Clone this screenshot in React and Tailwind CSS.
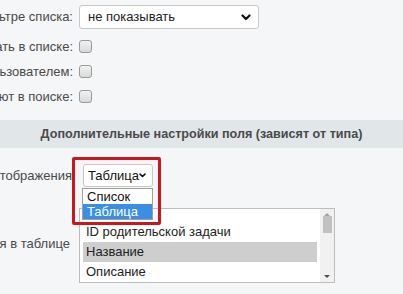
import React from "react";

function Chevron({ className = "" }) {
  return (
    <svg className={className} width="10" height="7" viewBox="0 0 10 7">
      <polyline points="1.5,1.5 5,5 8.5,1.5" fill="none" stroke="#111" strokeWidth="2.2" strokeLinecap="round" strokeLinejoin="round" />
    </svg>
  );
}

function Label({ children, className = "" }) {
  return (
    <div className={"w-[73px] shrink-0 flex justify-end whitespace-nowrap text-[13px] text-[#4a4a4a] " + className}>
      <span>{children}</span>
    </div>
  );
}

function Checkbox() {
  return (
    <div className="ml-[6px] w-[13px] h-[13px] rounded-[3px] border border-[#9a9a9a] bg-gradient-to-b from-[#f2f2f2] to-[#d9d9d9]" />
  );
}

export default function App() {
  return (
    <div
      className="relative w-[403px] h-[294px] overflow-hidden bg-[#f4f6f7] flex flex-col"
      style={{ fontFamily: '"Liberation Sans", Arial, sans-serif' }}
    >
      {/* row 1 */}
      <div className="flex items-center mt-[5px] h-[24px]">
        <Label>Показывать в фильтре списка:</Label>
        <div className="ml-[6px] w-[180px] h-[24px] rounded-[3px] border border-[#c8c8c8] bg-white flex items-center justify-between pl-[8px] pr-[7px] text-[13px] text-[#222]">
          <span>не показывать</span>
          <Chevron />
        </div>
      </div>

      <div className="mt-[5px] flex flex-col">
        <div className="flex items-center h-[25px]">
          <Label>Показывать в списке:</Label>
          <Checkbox />
        </div>
        <div className="flex items-center h-[25px]">
          <Label>Редактируется пользователем:</Label>
          <Checkbox />
        </div>
        <div className="flex items-center h-[25px]">
          <Label>Значения участвуют в поиске:</Label>
          <Checkbox />
        </div>
      </div>

      {/* header band */}
      <div className="mt-[11px] h-[28px] bg-[#e1e6e8] flex items-center justify-center text-[12.6px] font-bold text-[#4a4a4a]">
        Дополнительные настройки поля (зависят от типа)
      </div>

      {/* view type row */}
      <div className="flex items-center mt-[16px] h-[23px]">
        <Label className="pr-[1px]">Вид отображения</Label>
        <div className="ml-[10px] w-[70px] h-[23px] rounded-[3px] border border-[#c8c8c8] bg-white flex items-center justify-between pl-[4px] pr-[6px] text-[13px] text-[#111]">
          <span>Таблица</span>
          <Chevron />
        </div>
      </div>

      {/* fields in table */}
      <div className="flex items-start mt-[21px]">
        <Label className="pt-[26px] pr-[3px]">Поля в таблице</Label>
        <div className="ml-[6px] w-[256px] h-[75px] border border-[#bdbdbd] bg-white flex overflow-hidden">
          <div className="flex-1 pl-[3px] pr-[3px] overflow-hidden">
            <div className="pt-[13px] flex flex-col text-[13px] text-[#222]">
              <div className="h-[20px] flex items-center pl-[3px]">ID родительской задачи</div>
              <div className="h-[20px] flex items-center pl-[3px] bg-[#cecece]">Название</div>
              <div className="h-[20px] flex items-center pl-[3px]">Описание</div>
            </div>
          </div>
          <div className="w-[14px] bg-[#f1f1f1] flex flex-col items-center">
            <svg width="14" height="9" viewBox="0 0 14 9" className="mt-[1px]">
              <polygon points="4,6 10,6 7,3" fill="#a3a3a3" />
            </svg>
            <div className="w-[9px] h-[17px] bg-[#c1c1c1] mt-[-3px]" />
            <div className="flex-1" />
            <svg width="14" height="9" viewBox="0 0 14 9" className="mb-[1px]">
              <polygon points="4,3 10,3 7,6" fill="#505050" />
            </svg>
          </div>
        </div>
      </div>

      {/* open dropdown (overlay) */}
      <div className="absolute left-[82px] top-[188px] w-[71px] border border-[#a0a0a0] bg-white text-[13px] flex flex-col">
        <div className="h-[15px] flex items-center pl-[4px] text-[#111]">Список</div>
        <div className="h-[15px] flex items-center pl-[4px] bg-[#3a8ee6] text-white">Таблица</div>
      </div>

      {/* red annotation box */}
      <div className="absolute left-[72px] top-[157px] w-[89px] h-[68px] border-[3px] border-[#c8171d] rounded-[2px]" />
    </div>
  );
}
